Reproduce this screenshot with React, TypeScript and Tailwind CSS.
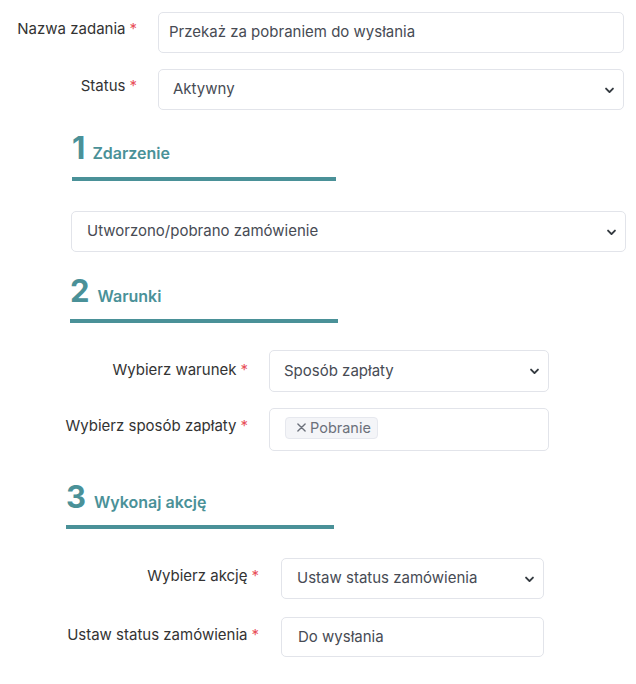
import React from "react";

const Star = () => <span className="text-[#e8505b] ml-[4px]">*</span>;

const Chevron = () => (
  <svg
    width="11"
    height="11"
    viewBox="0 0 16 16"
    className="absolute right-[8px] top-1/2 -translate-y-1/2 pointer-events-none"
  >
    <path d="M3 6l5 5 5-5" fill="none" stroke="#343a40" strokeWidth="2.8" strokeLinecap="round" strokeLinejoin="round" />
  </svg>
);

const Box = ({
  children,
  className,
  chevron,
  pl,
}: {
  children?: React.ReactNode;
  className: string;
  chevron?: boolean;
  pl: string;
}) => (
  <div
    className={`relative flex items-center border border-[#e2e4ea] rounded-[5px] bg-white text-[15px] text-[#474b54] ${pl} ${className}`}
  >
    {children}
    {chevron && <Chevron />}
  </div>
);

const Heading = ({
  num,
  title,
  className,
  bar,
  gap,
}: {
  num: string;
  title: string;
  className: string;
  bar: string;
  gap: string;
}) => (
  <div className={className}>
    <div className="flex items-baseline h-[30px]">
      <span className="text-[31px] font-bold leading-[30px] text-[#4a9198]">{num}</span>
      <span className={`text-[16px] font-semibold leading-[30px] text-[#4a9198] ${gap}`}>{title}</span>
    </div>
    <div className={`h-[4px] bg-[#4a9198] ${bar}`} />
  </div>
);

export default function App() {
  return (
    <div
      className="w-[636px] h-[684px] bg-white text-[15px] text-[#333] overflow-hidden"
      style={{ fontFamily: "Inter, 'Noto Sans', sans-serif" }}
    >
      <div className="pt-[12px]">
        <div className="flex items-start">
          <div className="w-[137px] text-right pt-[7px] leading-[20px]">
            Nazwa zadania
            <Star />
          </div>
          <Box className="ml-[21px] w-[466px] h-[41px]" pl="pl-[10px]">
            Przekaż za pobraniem do wysłania
          </Box>
        </div>
        <div className="flex items-start mt-[16px]">
          <div className="w-[137px] text-right pt-[7px] leading-[20px]">
            Status
            <Star />
          </div>
          <Box className="ml-[21px] w-[466px] h-[41px]" chevron pl="pl-[14px]">
            Aktywny
          </Box>
        </div>
      </div>

      <Heading num="1" title="Zdarzenie" gap="ml-[7px]" className="ml-[72px] mt-[23px]" bar="w-[264px] mt-[14px]" />
      <Box className="ml-[71px] mt-[30px] w-[555px] h-[41px]" chevron pl="pl-[15px]">
        Utworzono/pobrano zamówienie
      </Box>

      <Heading num="2" title="Warunki" gap="ml-[8px]" className="ml-[70px] mt-[24px]" bar="w-[268px] mt-[13px]" />
      <div className="mt-[27px]">
        <div className="flex items-start">
          <div className="w-[248px] text-right pt-[10px] leading-[20px]">
            Wybierz warunek
            <Star />
          </div>
          <Box className="ml-[21px] w-[280px] h-[42px]" chevron pl="pl-[14px]">
            Sposób zapłaty
          </Box>
        </div>
        <div className="flex items-start mt-[16px]">
          <div className="w-[248px] text-right pt-[8px] leading-[20px]">
            Wybierz sposób zapłaty
            <Star />
          </div>
          <div className="ml-[21px] w-[280px] h-[43px] border border-[#e2e4ea] rounded-[5px] bg-white pl-[15px] pt-[7px]">
            <span className="inline-flex items-center h-[22px] pl-[11px] pr-[6px] bg-[#f4f5f8] border border-[#e6e8ee] rounded-[4px] text-[14.5px] text-[#6b707a]">
              <svg width="9" height="9" viewBox="0 0 10 10" className="mr-[4px]">
                <path d="M1 1l8 8M9 1l-8 8" stroke="#6b707a" strokeWidth="1.5" strokeLinecap="round" />
              </svg>
              Pobranie
            </span>
          </div>
        </div>
      </div>

      <Heading num="3" title="Wykonaj akcję" gap="ml-[8px]" className="ml-[66px] mt-[31px]" bar="w-[268px] mt-[13px]" />
      <div className="mt-[29px]">
        <div className="flex items-start">
          <div className="w-[259px] text-right pt-[8px] leading-[20px]">
            Wybierz akcję
            <Star />
          </div>
          <Box className="ml-[22px] w-[263px] h-[41px]" chevron pl="pl-[15px]">
            Ustaw status zamówienia
          </Box>
        </div>
        <div className="flex items-start mt-[18px]">
          <div className="w-[259px] text-right pt-[8px] leading-[20px]">
            Ustaw status zamówienia
            <Star />
          </div>
          <Box className="ml-[22px] w-[263px] h-[40px]" pl="pl-[16px]">
            Do wysłania
          </Box>
        </div>
      </div>
    </div>
  );
}
